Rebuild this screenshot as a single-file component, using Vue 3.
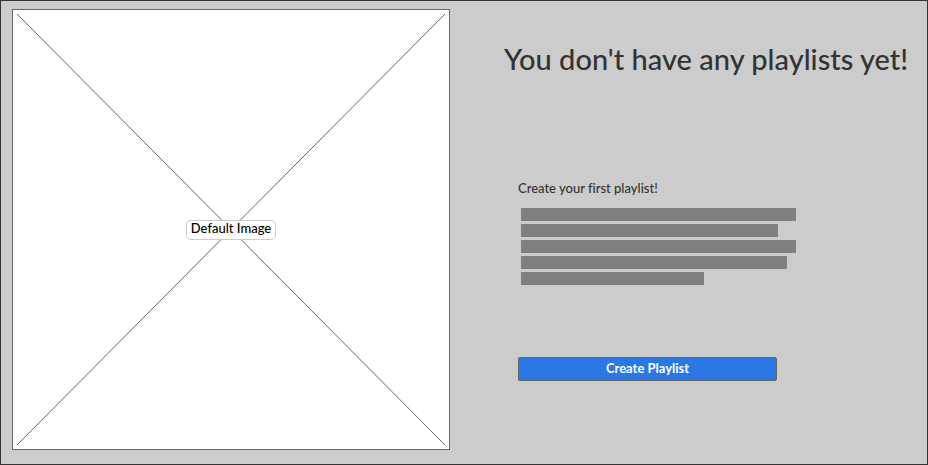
<script setup>
const lines = [100, 93.5, 100, 96.7, 66.5]
</script>

<template>
  <main class="page">
    <figure class="picture">
      <svg class="cross" viewBox="0 0 428 431" preserveAspectRatio="none" aria-hidden="true">
        <path d="M0 0L428 431M428 0L0 431" />
      </svg>
      <figcaption class="caption">Default Image</figcaption>
    </figure>
    <section class="content">
      <h1 class="title">You don't have any playlists yet!</h1>
      <div class="intro">
        <h2 class="subtitle">Create your first playlist!</h2>
        <div class="lines" aria-hidden="true">
          <div v-for="(width, i) in lines" :key="i" class="line" :style="{ width: width + '%' }"></div>
        </div>
        <button type="button" class="create">Create Playlist</button>
      </div>
    </section>
  </main>
</template>

<style>
body {
  margin: 0;
  background: #ccc;
}
</style>

<style scoped>
.page {
  box-sizing: border-box;
  display: grid;
  grid-template-columns: 438fr 477fr;
  align-items: start;
  min-height: 100vh;
  padding: 8px 0 8px 11px;
  border: 1px solid #333;
  background: #ccc;
  color: #333;
  font-family: Lato, "Liberation Sans", sans-serif;
  font-variant-ligatures: none;
}

.picture {
  box-sizing: border-box;
  display: grid;
  place-items: center;
  aspect-ratio: 438 / 441;
  margin: 0;
  padding: 4px;
  border: 1px solid #666;
  background: #fff;
}

.cross {
  grid-area: 1 / 1;
  width: 100%;
  height: 100%;
}

.cross path {
  fill: none;
  stroke: #666;
  stroke-width: 1;
}

.caption {
  grid-area: 1 / 1;
  box-sizing: border-box;
  padding: 0 4px 3px;
  border: 1px solid #ccc;
  border-radius: 5px;
  background: #fff;
  color: #000;
  font-size: 13px;
  font-weight: 500;
  line-height: 15px;
  white-space: nowrap;
}

.content {
  padding: 32px 0 0 54px;
}

.title {
  margin: 0;
  font-size: 29px;
  font-weight: 500;
  line-height: 36px;
  white-space: nowrap;
}

.intro {
  padding: 102px 0 0 14px;
}

.subtitle {
  margin: 0;
  font-size: 13px;
  font-weight: 500;
  line-height: 18px;
}

.lines {
  display: grid;
  gap: 3px;
  max-width: 275px;
  padding: 11px 0 0 3px;
}

.line {
  height: 13px;
  background: #808080;
}

.create {
  box-sizing: border-box;
  display: block;
  width: 100%;
  max-width: 259px;
  height: 24px;
  margin-top: 72px;
  padding: 0 0 2px;
  border: 1px solid #666;
  border-radius: 2px;
  background: #2b78e4;
  color: #fff;
  font: 700 13px/20px Lato, "Liberation Sans", sans-serif;
  cursor: pointer;
}
</style>
